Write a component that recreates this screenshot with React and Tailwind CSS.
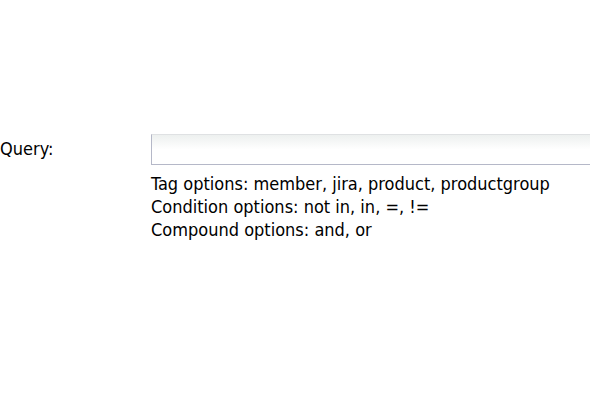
export default function App() {
  return (
    <main className="flex min-h-screen items-start bg-white pt-[134px] pr-[10px] font-['Tahoma','DejaVu_Sans_Condensed',sans-serif] text-[18px] leading-[23px] text-black">
      <label htmlFor="query" className="w-[151px] shrink-0 pt-[3px]">
        Query:
      </label>
      <div className="min-w-0 flex-1">
        <input
          id="query"
          type="text"
          aria-describedby="query-help"
          className="block h-[31px] w-full border border-r-0 border-t-[#dfe1e3] border-b-[#b5b8c8] border-l-[#b5b8c8] bg-linear-to-b from-[#edf0ef] to-white to-50% px-1 outline-none"
        />
        <div id="query-help" className="pt-[7px]">
          <p>Tag options: member, jira, product, productgroup</p>
          <p>Condition options: not in, in, =, !=</p>
          <p>Compound options: and, or</p>
        </div>
      </div>
    </main>
  );
}
